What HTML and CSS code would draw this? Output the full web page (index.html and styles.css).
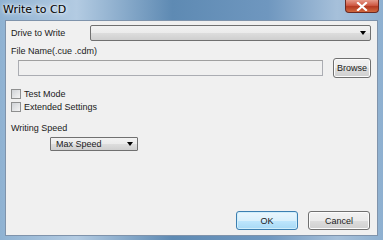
FILE: index.html
```html
<!DOCTYPE html>
<html>
<head>
<meta charset="utf-8">
<link rel="stylesheet" href="styles.css">
</head>
<body>
<div class="window">
  <div class="titlebar">
    <span class="title">Write to CD</span>
    <div class="close">
      <svg width="12" height="9" viewBox="0 0 12 9"><path d="M2 1 L10 8 M10 1 L2 8" stroke="#fff" stroke-width="2.2" stroke-linecap="square"/></svg>
    </div>
  </div>
  <div class="client">
    <div class="row drive">
      <span class="label">Drive to Write</span>
      <div class="combo wide"><span class="arrow"></span></div>
    </div>
    <div class="label fname">File Name(.cue .cdm)</div>
    <div class="row filerow">
      <div class="textbox"></div>
      <div class="btn browse">Browse</div>
    </div>
    <div class="checks">
      <label class="check"><span class="box"></span>Test Mode</label>
      <label class="check"><span class="box"></span>Extended Settings</label>
    </div>
    <div class="label speedlabel">Writing Speed</div>
    <div class="combo speed"><span class="val">Max Speed</span><span class="arrow"></span></div>
    <div class="spacer"></div>
    <div class="buttons">
      <div class="btn ok">OK</div>
      <div class="btn cancel">Cancel</div>
    </div>
  </div>
</div>
</body>
</html>
```
FILE: styles.css
```css
* { box-sizing: border-box; }
html, body { margin: 0; padding: 0; }
body { width: 383px; height: 240px; overflow: hidden; font-family: "Liberation Sans", Arial, sans-serif; font-size: 9px; color: #1a1a1a; }
.window {
  width: 383px; height: 240px;
  background: linear-gradient(90deg, #8fb2d2 0%, #b3cbe2 20%, #5e8ab3 45%, #6f97bf 70%, #a6c0da 88%, #8eb0d0 100%);
  display: flex; flex-direction: column;
  padding: 0 5px 4px 5px;
}
.titlebar { height: 20px; display: flex; align-items: flex-start; justify-content: space-between; flex: none; }
.title { font-family: "DejaVu Sans", sans-serif; font-size: 11px; margin-top: 3px; margin-left: -2px; color: #000; text-shadow: 0 0 6px #fff, 0 0 3px #fff; }
.close {
  width: 34px; height: 13px; margin-right: -1px;
  border: 1px solid #6b2a22; border-top: none; border-radius: 0 0 4px 4px;
  background: linear-gradient(#e69a8a 0%, #cf5a44 45%, #b43a22 55%, #d1683e 100%);
  display: flex; align-items: center; justify-content: center;
}
.client {
  flex: 1; background: #f0f0f0; border: 1px solid #7f93ab;
  display: flex; flex-direction: column; padding: 4px 5px 5px 5px;
}
.row { display: flex; align-items: center; }
.drive { justify-content: space-between; height: 16px; }
.label { white-space: nowrap; }
.combo {
  height: 16px; border: 1px solid #707070; border-radius: 2px;
  background: linear-gradient(#f2f2f2 0%, #ebebeb 50%, #dddddd 51%, #cfcfcf 100%);
  display: flex; align-items: center; justify-content: space-between; padding: 0 4px 0 5px;
}
.combo.wide { width: 281px; margin-right: 1px; justify-content: flex-end; }
.arrow { width: 0; height: 0; border-left: 3px solid transparent; border-right: 3px solid transparent; border-top: 4px solid #000; }
.fname { margin-top: 4px; line-height: 12px; }
.filerow { margin-top: 1px; margin-left: 7px; justify-content: space-between; align-items: center; height: 20px; }
.textbox { width: 305px; height: 16px; border: 1px solid #abadb3; border-top-color: #a0a0a0; background: #f0f0f0; }
.btn {
  border: 1px solid #707070; border-radius: 3px;
  background: linear-gradient(#f2f2f2 0%, #ebebeb 50%, #dddddd 51%, #cfcfcf 100%);
  display: flex; align-items: center; justify-content: center;
  box-shadow: inset 0 0 0 1px #fcfcfc;
}
.browse { width: 38px; height: 20px; margin-right: 1px; }
.checks { margin-top: 11px; display: flex; flex-direction: column; gap: 3px; }
.check { display: flex; align-items: center; height: 10px; }
.box { width: 10px; height: 10px; border: 1px solid #8e8f8f; background: linear-gradient(135deg, #cfd2d6, #f4f4f4); margin-right: 3px; }
.speedlabel { margin-top: 10px; line-height: 12px; }
.combo.speed { width: 88px; height: 14px; margin-left: 39px; margin-top: 3px; border-radius: 1px; }
.val { line-height: 12px; }
.spacer { flex: 1; }
.buttons { display: flex; justify-content: flex-end; gap: 10px; margin-right: 2px; }
.buttons .btn { width: 62px; height: 19px; }
.ok { border-color: #3c7fb1; background: linear-gradient(#eaf6fd 0%, #d9f0fc 50%, #bee6fd 51%, #a7d9f5 100%); box-shadow: inset 0 0 0 1px #d0eefb; }
```
